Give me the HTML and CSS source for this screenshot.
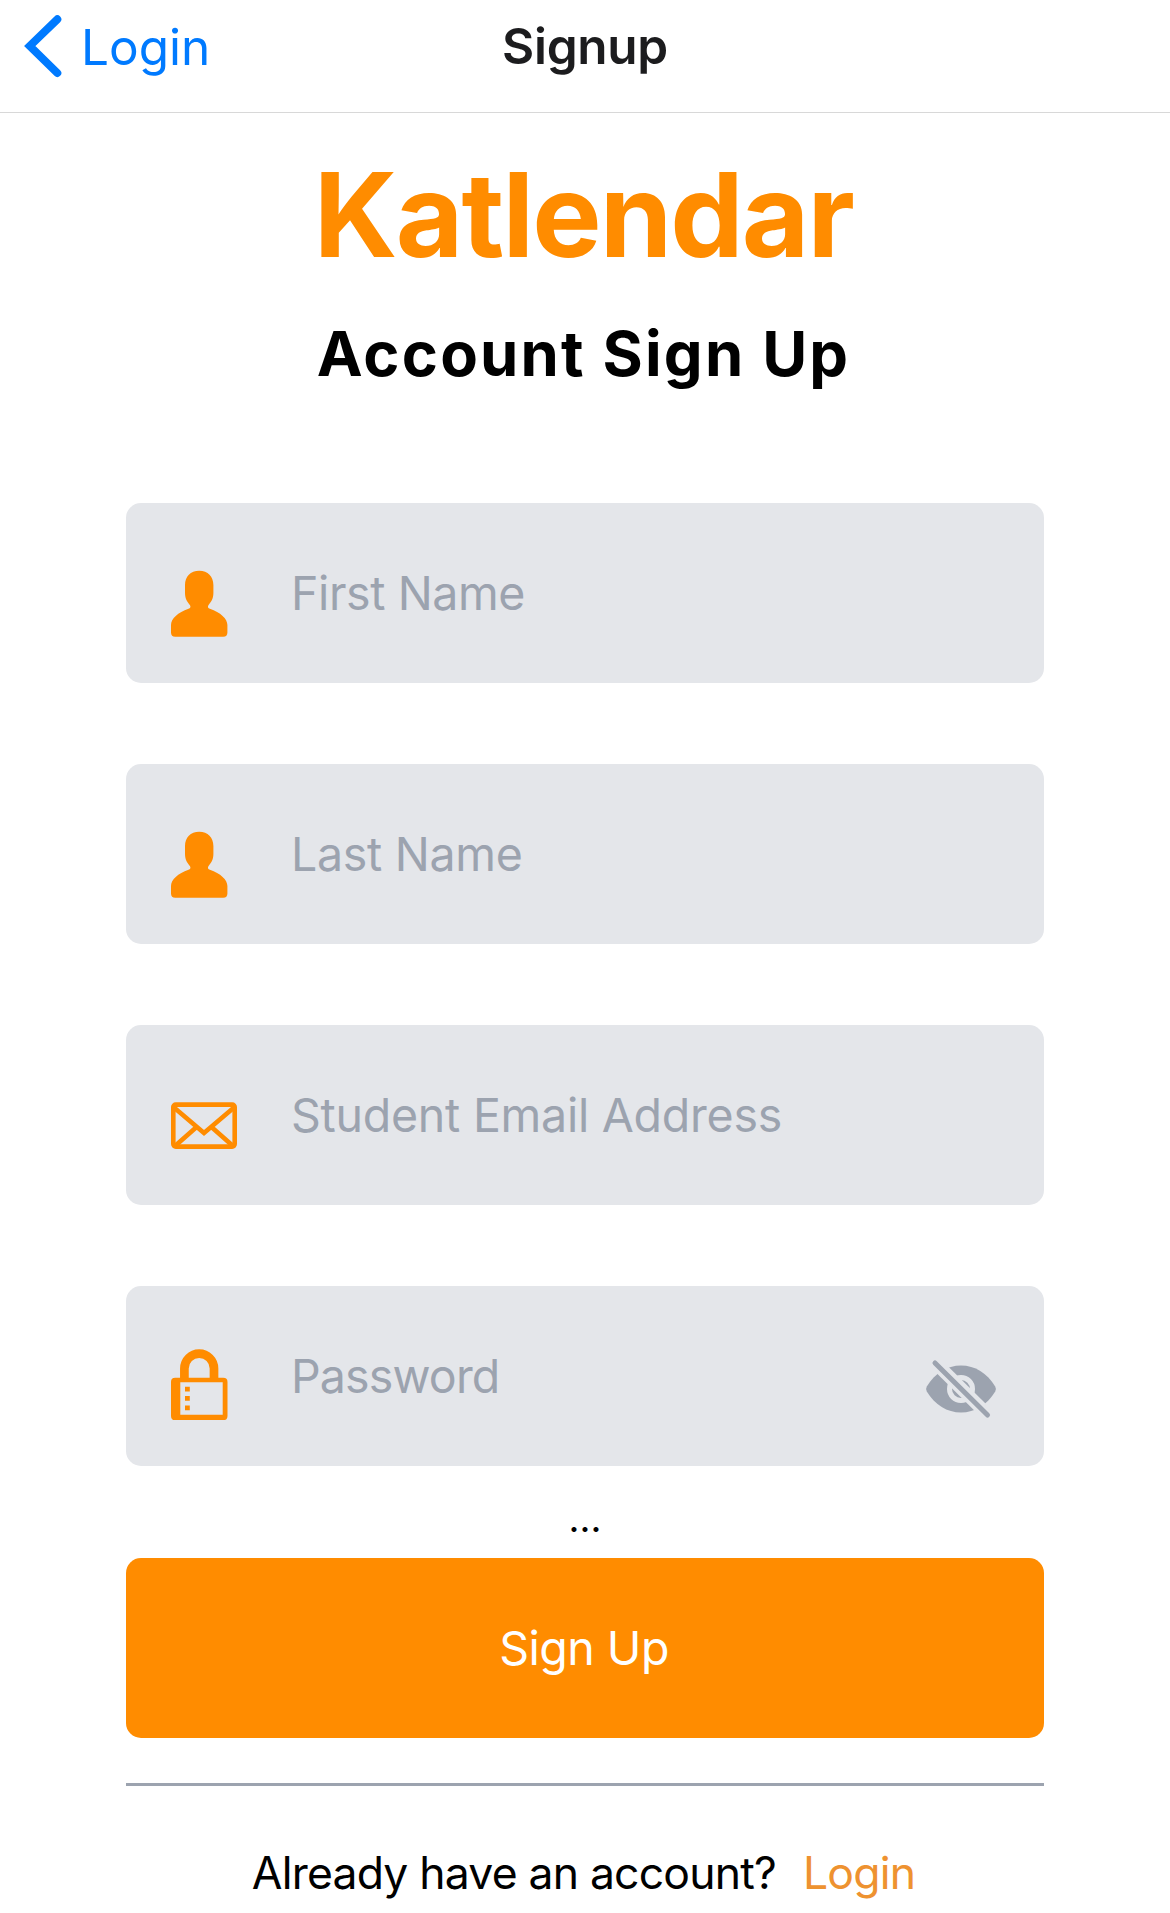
FILE: index.html
```html
<!DOCTYPE html>
<html lang="en">
<head>
<meta charset="utf-8">
<title>Signup</title>
<link rel="stylesheet" href="styles.css">
</head>
<body>
<header class="nav">
  <a class="nav-back">
    <svg class="chevron" width="38" height="64" viewBox="0 0 38 64"><path d="M33.300 5.300 5.800 32l27.500 27" fill="none" stroke="currentColor" stroke-width="8" stroke-linecap="round"/></svg>
    <span class="nav-back-label">Login</span>
  </a>
  <h1 class="nav-title">Signup</h1>
</header>
<main class="page">
  <h2 class="brand">Katlendar</h2>
  <h3 class="subtitle">Account Sign Up</h3>
  <form class="form">
    <label class="field">
      <svg class="icon" viewBox="0 0 70 72"><path d="M28.200 2.700C19.500 2.700 14 8.500 14 17v8c0 6 2.500 9 5 12.200 1 1.800.3 2.800-1.500 3.500C7 44.500 0 50.500 0 57v7.500q0 4.200 4.200 4.200h48q4.200 0 4.200-4.200V57c0-6.500-7-12.500-17.500-16.300-1.800-.7-2.500-1.700-1.500-3.500 2.500-3.200 5-6.200 5-12.200v-8C42.400 8.500 36.900 2.700 28.200 2.700z" fill="currentColor"/></svg>
      <input class="first" placeholder="First Name">
    </label>
    <label class="field">
      <svg class="icon" viewBox="0 0 70 72"><path d="M28.200 2.700C19.500 2.700 14 8.500 14 17v8c0 6 2.500 9 5 12.200 1 1.800.3 2.800-1.500 3.500C7 44.500 0 50.500 0 57v7.500q0 4.200 4.200 4.200h48q4.200 0 4.200-4.200V57c0-6.500-7-12.500-17.500-16.300-1.800-.7-2.500-1.700-1.500-3.500 2.500-3.200 5-6.200 5-12.200v-8C42.400 8.500 36.900 2.700 28.200 2.700z" fill="currentColor"/></svg>
      <input class="last" placeholder="Last Name">
    </label>
    <label class="field">
      <svg class="icon" viewBox="0 0 70 72" fill="none" stroke="currentColor" stroke-width="4.600"><rect x="2.300" y="14.600" width="61.400" height="42" rx="2.500"/><path d="M3 17.500 33 43l30-25.500M25 37.500 4 56M41 37.500 62 56"/></svg>
      <input class="email" placeholder="Student Email Address">
    </label>
    <label class="field">
      <svg class="icon" viewBox="0 0 70 72" fill="currentColor"><path d="M13.400 28V17.500a14.800 14.800 0 0 1 29.600 0V28" fill="none" stroke="currentColor" stroke-width="8.700"/><path fill-rule="evenodd" d="M4.200 26.700h48q4.300 0 4.300 4.200v34q0 4.200-4.300 4.200h-48Q0 69.100 0 64.900v-34q0-4.200 4.200-4.200zM9.300 31.200v32.600h42.400V31.200z"/><path d="M14 35.700h4.800v4.800H14zM14 45h4.800v4.800H14zM14 54.400h4.800v4.800H14z"/></svg>
      <input class="pass" type="text" placeholder="Password">
      <svg class="eye" viewBox="0 0 70 72"><path d="M.8 33.500C9 20 21 12.500 35 12.500S61 20 69.200 33.500q1.500 2.500 0 5C61 52 49 59.500 35 59.500S9 52 .8 38.500q-1.500-2.500 0-5z" fill="#9ca3af"/><circle cx="35" cy="36" r="11.500" fill="#9ca3af" stroke="#e4e6ea" stroke-width="5"/><path d="M8.500 9 62 62" stroke="#e4e6ea" stroke-width="13"/><path d="M9 10 61.500 62" stroke="#9ca3af" stroke-width="5" stroke-linecap="round"/></svg>
    </label>
    <p class="message">...</p>
    <button class="submit" type="button">Sign Up</button>
  </form>
  <hr class="rule">
  <p class="footer"><span class="question">Already have an account?</span><a class="login">Login</a></p>
</main>
</body>
</html>
```
FILE: styles.css
```css
* { box-sizing: border-box; margin: 0; padding: 0; }
body { width: 1170px; height: 1913px; overflow: hidden; background: #fff; color: #000; font-family: Inter, "Liberation Sans", sans-serif; white-space: nowrap; }
.nav { display: grid; grid-template-columns: 1fr auto 1fr; align-items: center; height: 113px; padding: 0 24px 20px; border-bottom: 1px solid #d8d8d8; }
.nav-back { display: flex; align-items: center; gap: 19px; color: #007aff; }
.nav-back-label { font-size: 49.5px; line-height: 60px; padding-top: 2px; }
.nav-title { grid-column: 2; font-size: 49.5px; line-height: 60px; font-weight: 600; letter-spacing: -0.3px; color: #1c1c1e; }
.page { display: flex; flex-direction: column; padding: 0 126px; }
.brand { margin-top: 32px; padding-right: 3px; font-size: 116.5px; line-height: 140px; font-weight: 700; letter-spacing: -1.9px; color: #ff8c00; text-align: center; }
.subtitle { margin-top: 29px; padding-right: 3px; font-size: 61.5px; line-height: 80px; font-weight: 700; text-align: center; letter-spacing: 2.2px; }
.form { display: flex; flex-direction: column; margin-top: 109px; }
.field { display: flex; align-items: center; height: 180px; margin-bottom: 81px; padding: 0 48px 0 45px; border-radius: 15px; background: #e4e6ea; }
.icon { flex: none; width: 70px; height: 72px; margin-top: 22px; overflow: visible; color: #ff8c00; }
.field input { flex: 1; min-width: 0; height: 100px; margin-left: 50px; border: 0; outline: 0; background: none; font: 46.5px Inter, "Liberation Sans", sans-serif; color: #000; }
.field input::placeholder { color: #9ca3af; opacity: 1; }
.field .first { letter-spacing: -0.4px; }
.field .last { letter-spacing: -0.3px; }
.field .email { letter-spacing: -0.25px; }
.field .pass { letter-spacing: -0.85px; }
.eye { flex: none; width: 70px; height: 72px; margin-top: 26px; overflow: visible; }
.message { height: 92px; margin-top: -81px; padding-top: 27px; font-size: 38px; line-height: 50px; text-align: center; }
.submit { height: 180px; padding: 0 2px 1px 0; border: 0; border-radius: 15px; background: #ff8c00; color: #fff; font: 46.5px Inter, "Liberation Sans", sans-serif; letter-spacing: -0.5px; }
.rule { margin-top: 45px; height: 3px; border: 0; background: #9ca3af; }
.footer { display: flex; justify-content: center; gap: 27px; margin-top: 57px; padding-right: 3px; font-size: 44.5px; line-height: 60px; letter-spacing: -0.8px; }
.login { color: #ee9230; }
```
